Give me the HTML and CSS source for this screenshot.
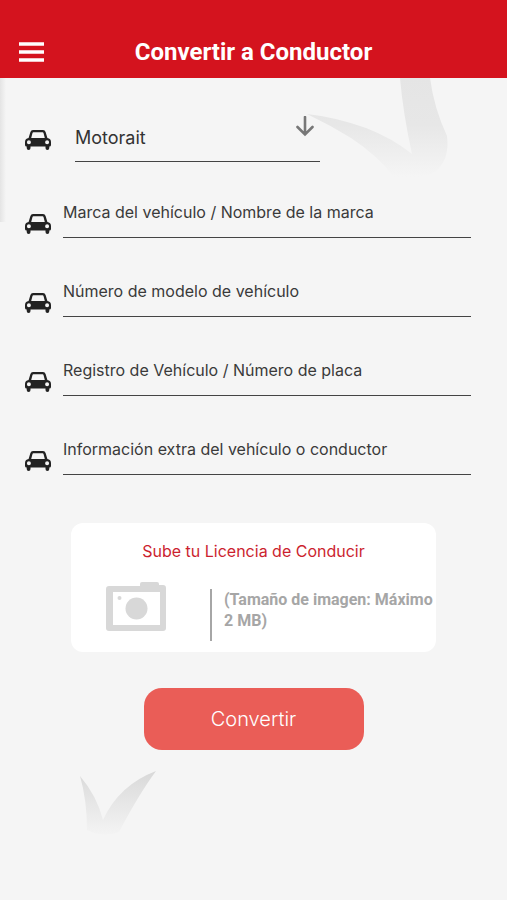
FILE: index.html
```html
<!DOCTYPE html>
<html lang="es">
<head>
<meta charset="utf-8">
<meta name="viewport" content="width=device-width, initial-scale=1">
<title>Convertir a Conductor</title>
<link rel="stylesheet" href="styles.css">
</head>
<body>
<svg class="defs" width="0" height="0" aria-hidden="true">
  <symbol id="car" viewBox="0 0 26 20">
    <path fill="#222" fill-rule="evenodd" d="M8 0H18Q20 0 20.600 2L22.400 8Q26 8.600 26 12V15Q26 16.500 24.300 16.500V18Q24.300 20 22.400 20Q20.500 20 20.500 18V16.500H5.500V18Q5.500 20 3.600 20Q1.700 20 1.700 18V16.500Q0 16.500 0 15V12Q0 8.600 3.600 8L5.400 2Q6 0 8 0ZM8.400 2.300Q7.700 2.300 7.500 3L6.200 8H19.800L18.500 3Q18.300 2.300 17.600 2.300ZM3.900 10.200A2 2 0 1 0 3.900 14.200A2 2 0 1 0 3.900 10.200ZM22.100 10.200A2 2 0 1 0 22.100 14.200A2 2 0 1 0 22.100 10.200Z"/>
  </symbol>
</svg>
<header class="bar">
  <button class="menu" type="button" aria-label="Menú">
    <svg width="25" height="20" viewBox="0 0 25 20" aria-hidden="true"><path d="M0 2H25M0 10H25M0 18H25" stroke="#fff" stroke-width="3.600"/></svg>
  </button>
  <h1 class="title">Convertir a Conductor</h1>
</header>
<main class="page">
  <div class="edge"></div>
  <svg class="swoosh-top" width="150" height="104" viewBox="0 0 150 104" aria-hidden="true">
    <defs>
      <linearGradient id="fade-top" x1="0" y1="0" x2="0" y2="104" gradientUnits="userSpaceOnUse">
        <stop offset="0" stop-color="#e5e5e5"/><stop offset=".45" stop-color="#e7e7e7"/><stop offset=".95" stop-color="#f5f5f5"/>
      </linearGradient>
    </defs>
    <path fill="url(#fade-top)" d="M2 36Q30 39 61 50Q87 60 107 76Q98 35 95 0H125Q129 30 142 58Q145 82 130 94Q116 102 90 100Q72 77 46 60Q25 47 2 36Z"/>
  </svg>
  <form class="form">
    <div class="row row-type">
      <svg class="car" aria-hidden="true"><use href="#car"/></svg>
      <div class="picker">
        <select class="select" aria-label="Tipo de vehículo"><option>Motorait</option></select>
        <svg class="arrow" width="18" height="21" viewBox="0 0 18 21" aria-hidden="true"><path d="M9 1V18M1.500 11L9 18.500L16.500 11" fill="none" stroke="#777" stroke-width="2.600" stroke-linecap="round"/></svg>
      </div>
    </div>
    <div class="fields">
      <div class="row">
        <svg class="car" aria-hidden="true"><use href="#car"/></svg>
        <input class="input" type="text" aria-label="Marca del vehículo / Nombre de la marca" placeholder="Marca del vehículo / Nombre de la marca">
      </div>
      <div class="row">
        <svg class="car" aria-hidden="true"><use href="#car"/></svg>
        <input class="input" type="text" aria-label="Número de modelo de vehículo" placeholder="Número de modelo de vehículo">
      </div>
      <div class="row">
        <svg class="car" aria-hidden="true"><use href="#car"/></svg>
        <input class="input" type="text" aria-label="Registro de Vehículo / Número de placa" placeholder="Registro de Vehículo / Número de placa">
      </div>
      <div class="row">
        <svg class="car" aria-hidden="true"><use href="#car"/></svg>
        <input class="input" type="text" aria-label="Información extra del vehículo o conductor" placeholder="Información extra del vehículo o conductor">
      </div>
    </div>
    <button class="upload" type="button">
      <span class="upload-title">Sube tu Licencia de Conducir</span>
      <span class="upload-body">
        <svg class="camera" width="60" height="50" viewBox="0 0 60 50" aria-hidden="true">
          <path fill="#d8d8d8" fill-rule="evenodd" d="M3 4H34V2Q34 0 36 0H51Q53 0 53 2V3H57Q60 3 60 6V46Q60 49 57 49H3Q0 49 0 46V7Q0 4 3 4ZM7 10V43H54V10Z"/>
          <circle cx="30.500" cy="26.500" r="11" fill="#d8d8d8"/><circle cx="13.500" cy="16" r="2" fill="#d8d8d8"/>
        </svg>
        <span class="upload-note">(Tamaño de imagen: Máximo 2 MB)</span>
      </span>
    </button>
    <button class="submit" type="submit">Convertir</button>
  </form>
  <svg class="swoosh-bottom" width="78" height="68" viewBox="0 0 78 68" aria-hidden="true">
    <defs>
      <linearGradient id="fade-bottom" x1="0" y1="0" x2="0" y2="68" gradientUnits="userSpaceOnUse">
        <stop offset="0" stop-color="#d8d8d8"/><stop offset=".5" stop-color="#e7e7e7"/><stop offset="1" stop-color="#f5f5f5"/>
      </linearGradient>
    </defs>
    <path fill="url(#fade-bottom)" d="M1 6Q18 26 24 50Q40 15 77 1Q60 24 40 62Q24 68 8 60Q8 30 1 6Z"/>
  </svg>
</main>
</body>
</html>
```
FILE: styles.css
```css
* {
  box-sizing: border-box;
}

body {
  margin: 0;
  min-height: 100vh;
  display: flex;
  flex-direction: column;
  background: #f5f5f5;
  color: #333;
  font-family: Inter, "Liberation Sans", sans-serif;
}

button,
input,
select {
  font: inherit;
  color: inherit;
  border: 0;
  border-radius: 0;
  padding: 0;
  background: none;
}

.defs {
  position: absolute;
}

.bar {
  display: grid;
  grid-template-columns: 64px 1fr 64px;
  align-items: center;
  padding-top: 26px;
  height: 78px;
  background: #d4131e;
}

.menu {
  display: flex;
  padding-left: 19px;
}

.title {
  margin: 0;
  color: #fff;
  font: 700 24px/32px Roboto, sans-serif;
  text-align: center;
}

.page {
  position: relative;
  flex: 1;
}

.edge {
  position: absolute;
  top: 0;
  left: 0;
  width: 6px;
  height: 144px;
  background: linear-gradient(to right, #e4e4e4, #f5f5f5);
}

.swoosh-top {
  position: absolute;
  top: 0;
  right: 52px;
}

.swoosh-bottom {
  position: absolute;
  left: 79px;
  bottom: 62px;
}

.form {
  position: relative;
  display: flex;
  flex-direction: column;
  padding-top: 36px;
}

.row {
  display: flex;
  align-items: flex-end;
  gap: 12px;
  padding: 0 36px 0 25px;
}

.row-type {
  gap: 24px;
}

.car {
  flex: none;
  width: 26px;
  height: 20px;
  margin-bottom: 4px;
}

.row-type .car {
  margin-bottom: 12px;
}

.picker {
  position: relative;
  width: 55%;
}

.select {
  appearance: none;
  display: block;
  width: 100%;
  height: 48px;
  font-size: 18px;
  border-bottom: 1px solid #444;
}

.arrow {
  position: absolute;
  top: 2px;
  right: 6px;
  pointer-events: none;
}

.fields {
  display: grid;
  gap: 40px;
  margin-top: 37px;
}

.input {
  flex: 1;
  min-width: 0;
  height: 39px;
  padding-bottom: 12px;
  font-size: 16px;
  border-bottom: 1px solid #444;
}

.input::placeholder {
  color: #3a3a3a;
  opacity: 1;
}

.upload {
  align-self: center;
  width: 72%;
  margin-top: 48px;
  padding: 16px 0 8px;
  border-radius: 12px;
  background: #fff;
}

.upload-title {
  display: block;
  color: #cc1f2f;
  font-size: 16px;
  line-height: 24px;
}

.upload-body {
  display: flex;
  justify-content: space-between;
  align-items: flex-end;
  margin-top: 19px;
  padding-left: 35px;
}

.camera {
  flex: none;
  margin-bottom: 12px;
}

.upload-note {
  width: 226px;
  margin-bottom: 3px;
  padding: 0 0 10px 12px;
  border-left: 2px solid #a6a6a6;
  color: #a6a6a6;
  font: 700 16px/21px Roboto, sans-serif;
  text-align: left;
}

.submit {
  align-self: center;
  width: 220px;
  height: 62px;
  margin-top: 36px;
  border-radius: 18px;
  background: #ea5d57;
  color: #fff;
  font-size: 20px;
  font-weight: 300;
}
```
